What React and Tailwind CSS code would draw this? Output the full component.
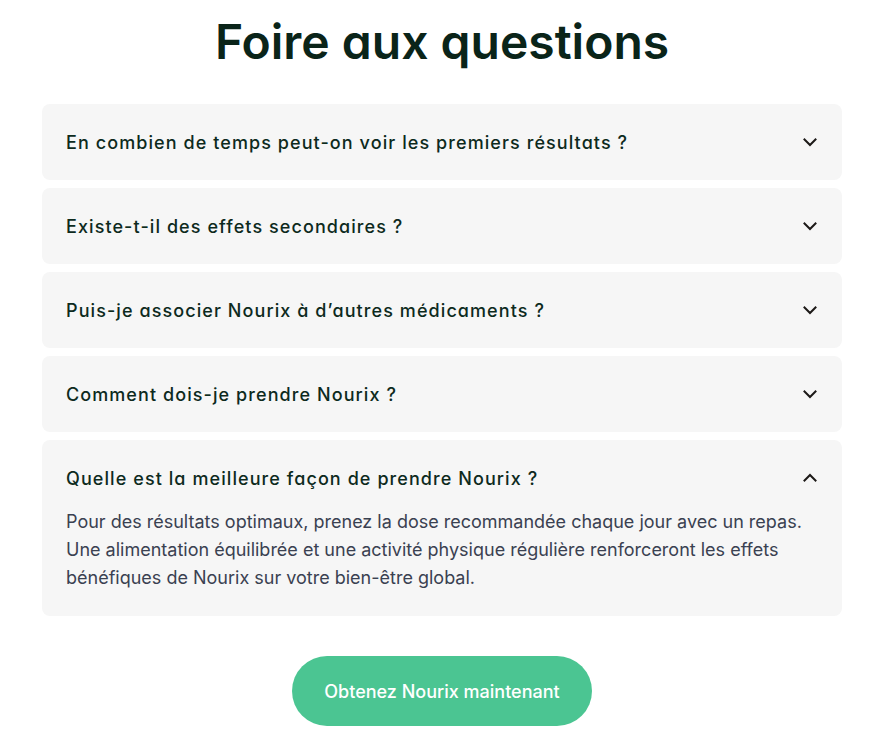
import React, { useState } from "react";

const faqs = [
  {
    q: "En combien de temps peut-on voir les premiers résultats ?",
    a: "La plupart des utilisateurs constatent les premiers effets après quelques semaines d’utilisation régulière.",
  },
  {
    q: "Existe-t-il des effets secondaires ?",
    a: "Nourix est formulé à partir d’ingrédients naturels et est généralement bien toléré.",
  },
  {
    q: "Puis-je associer Nourix à d’autres médicaments ?",
    a: "En cas de traitement en cours, demandez l’avis de votre médecin avant de commencer.",
  },
  {
    q: "Comment dois-je prendre Nourix ?",
    a: "Suivez la posologie indiquée sur l’emballage, de préférence au moment des repas.",
  },
  {
    q: "Quelle est la meilleure façon de prendre Nourix ?",
    a: "Pour des résultats optimaux, prenez la dose recommandée chaque jour avec un repas. Une alimentation équilibrée et une activité physique régulière renforceront les effets bénéfiques de Nourix sur votre bien-être global.",
  },
];

// petit chevron, pivoté quand la question est ouverte
const Chevron = ({ open }) => (
  <svg
    width="16"
    height="16"
    viewBox="0 0 16 16"
    fill="none"
    stroke="#1c1917"
    strokeWidth="2"
    strokeLinecap="square"
    strokeLinejoin="miter"
    className={open ? "rotate-180" : ""}
  >
    <path d="M2.5 5.5 8 11l5.5-5.5" />
  </svg>
);

const App = () => {
  const [openIndex, setOpenIndex] = useState(4);

  return (
    <div className="min-h-screen bg-white font-['Inter',sans-serif]">
      <h1 className="pt-[8px] text-center text-[48px] leading-[68px] font-semibold text-[#0a2419] [font-feature-settings:'cv11']">
        Foire aux questions
      </h1>

      <div className="mx-auto mt-[28px] flex w-[800px] flex-col gap-2">
        {faqs.map((item, i) => {
          const open = openIndex === i;
          return (
            <div key={i} className="rounded-lg bg-[#f6f6f6] p-6">
              <button
                onClick={() => setOpenIndex(open ? -1 : i)}
                className="flex h-7 w-full items-center justify-between text-left"
              >
                <span className="text-[18px] font-medium tracking-[0.06em] text-[#0d2a1d] [font-feature-settings:'cv11']">
                  {item.q}
                </span>
                <Chevron open={open} />
              </button>
              {open && (
                <p className="mt-4 text-[18px] leading-7 text-[#3a4151]">
                  {item.a}
                </p>
              )}
            </div>
          );
        })}
      </div>

      <div className="mt-10 flex justify-center">
        <button className="h-[70px] w-[300px] rounded-full bg-[#4bc592] text-[18px] font-medium text-white">
          Obtenez Nourix maintenant
        </button>
      </div>
    </div>
  );
};

export default App;
